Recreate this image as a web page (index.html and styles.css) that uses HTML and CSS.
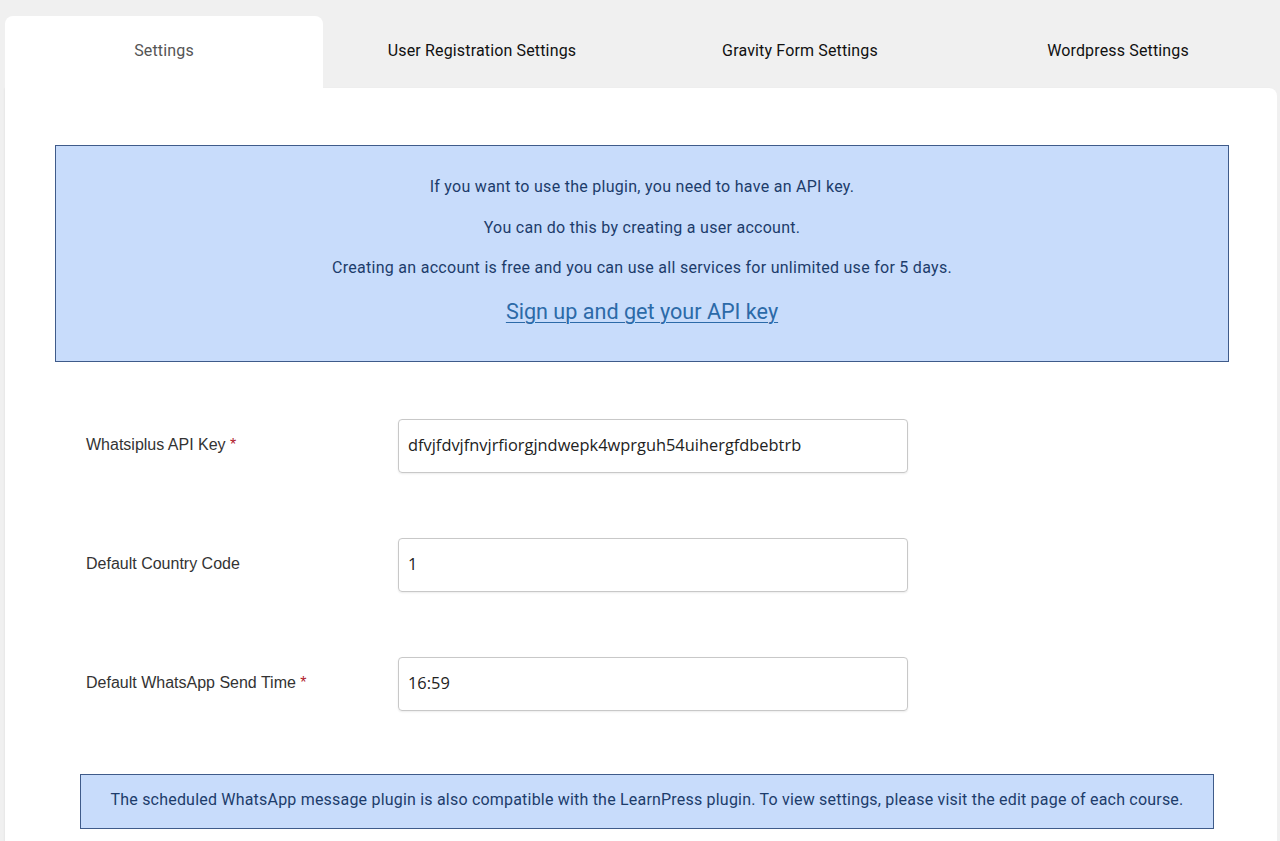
FILE: index.html
```html
<!DOCTYPE html>
<html>
<head>
<meta charset="utf-8">
<link rel="stylesheet" href="styles.css">
</head>
<body>
<div class="tabs">
  <div class="tab active">Settings</div>
  <div class="tab">User Registration Settings</div>
  <div class="tab">Gravity Form Settings</div>
  <div class="tab">Wordpress Settings</div>
</div>
<div class="panel">
  <div class="info">
    <p>If you want to use the plugin, you need to have an API key.</p>
    <p>You can do this by creating a user account.</p>
    <p>Creating an account is free and you can use all services for unlimited use for 5 days.</p>
    <a class="signup" href="#">Sign up and get your API key</a>
  </div>
  <div class="form">
    <div class="row">
      <label class="label">Whatsiplus API Key <span class="req">*</span></label>
      <div class="input">dfvjfdvjfnvjrfiorgjndwepk4wprguh54uihergfdbebtrb</div>
    </div>
    <div class="row">
      <label class="label">Default Country Code</label>
      <div class="input">1</div>
    </div>
    <div class="row">
      <label class="label">Default WhatsApp Send Time <span class="req">*</span></label>
      <div class="input">16:59</div>
    </div>
  </div>
  <div class="note">The scheduled WhatsApp message plugin is also compatible with the LearnPress plugin. To view settings, please visit the edit page of each course.</div>
</div>
</body>
</html>
```

FILE: styles.css
```css
html, body {
  margin: 0;
  padding: 0;
}
body {
  background: #f0f0f0;
  padding: 16px 3px 0 5px;
  height: 841px;
  box-sizing: border-box;
  overflow: hidden;
  font-family: Roboto, "Liberation Sans", sans-serif;
}
.tabs {
  display: flex;
}
.tab {
  width: 318px;
  height: 72px;
  display: flex;
  align-items: center;
  justify-content: center;
  padding-bottom: 4px;
  box-sizing: border-box;
  font-size: 16px;
  letter-spacing: 0.15px;
  color: #111;
}
.tab.active {
  background: #fff;
  color: #555;
  border-radius: 8px 8px 0 0;
}
.panel {
  background: #fff;
  border-radius: 0 8px 0 0;
  padding: 57px 48px 40px 50px;
  box-shadow: -1px 0 2px rgba(0,0,0,0.04);
}
.info {
  background: #c8dcfb;
  border: 1px solid #3f5b8a;
  text-align: center;
  padding: 29px 20px 34px;
  color: #1d3c6b;
}
.info p {
  margin: 0 0 16.5px;
  font-size: 16px;
  line-height: 24px;
  letter-spacing: 0.28px;
}
.signup {
  display: inline-block;
  margin-top: 0;
  font-size: 21.6px;
  line-height: 30px;
  color: #2c6aa8;
  text-decoration: underline;
  text-underline-offset: 3px;
  text-decoration-thickness: 1px;
}
.form {
  padding: 57px 0 0 31px;
}
.row {
  display: flex;
  align-items: center;
  margin-bottom: 65px;
}
.label {
  width: 312px;
  font-family: "Liberation Sans", Arial, sans-serif;
  font-size: 16px;
  color: #333;
  padding-bottom: 2px;
}
.req {
  color: #b0202a;
}
.input {
  width: 510px;
  height: 54px;
  box-sizing: border-box;
  border: 1px solid #c8c8c8;
  border-radius: 4px;
  box-shadow: 0 1px 2px rgba(0,0,0,0.08);
  padding: 0 9px 2px;
  display: flex;
  align-items: center;
  font-family: "Open Sans", sans-serif;
  font-size: 16.4px;
  color: #222;
}
.note {
  margin: -2px 15px 0 25px;
  height: 55px;
  box-sizing: border-box;
  background: #c8dcfb;
  border: 1px solid #3f5b8a;
  color: #1d3c6b;
  display: flex;
  align-items: center;
  justify-content: center;
  padding-bottom: 3px;
  font-size: 16px;
  letter-spacing: 0.2px;
}
```
